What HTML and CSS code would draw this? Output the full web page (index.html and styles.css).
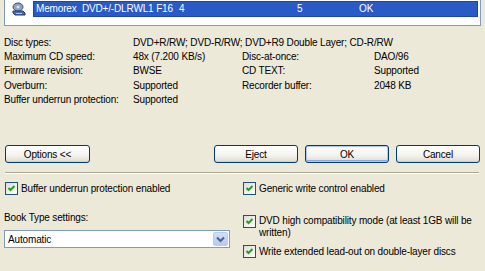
FILE: index.html
```html
<!DOCTYPE html>
<html lang="en">
<head>
    <meta charset="UTF-8">
    <meta name="viewport" content="width=device-width, initial-scale=1.0">
    <link rel="stylesheet" href="styles.css">
    <title>Recorder Selection</title>
</head>
<body>

    <!-- Drive list -->
    <div class="drive-list">
        <div class="drive-row">
            <svg class="drive-icon" width="14" height="14" viewBox="0 0 14 14">
                <ellipse cx="6" cy="5" rx="5" ry="4" fill="#8fa3c4" stroke="#3c4f78" stroke-width="1"/>
                <ellipse cx="6" cy="5" rx="1.5" ry="1.2" fill="#dfe6f2"/>
                <path d="M1 9 L11 9 L13 11 L13 13 L3 13 L1 11 Z" fill="#4a6db3" stroke="#23386a" stroke-width="1"/>
                <rect x="4" y="11" width="6" height="1" fill="#a9c0ea"/>
            </svg>
            <div class="drive-selected">
                <span>Memorex&nbsp; DVD+/-DLRWL1 F16</span>
                <span>4</span>
                <span>5</span>
                <span>OK</span>
            </div>
        </div>
    </div>

    <!-- Drive properties -->
    <div class="info">
        <span>Disc types:</span>
        <span class="wide">DVD+R/RW; DVD-R/RW; DVD+R9 Double Layer; CD-R/RW</span>

        <span>Maximum CD speed:</span>
        <span>48x (7.200 KB/s)</span>
        <span>Disc-at-once:</span>
        <span>DAO/96</span>

        <span>Firmware revision:</span>
        <span>BWSE</span>
        <span>CD TEXT:</span>
        <span>Supported</span>

        <span>Overburn:</span>
        <span>Supported</span>
        <span>Recorder buffer:</span>
        <span>2048 KB</span>

        <span>Buffer underrun protection:</span>
        <span>Supported</span>
    </div>

    <div class="button-bar">
        <button class="btn">Options &lt;&lt;</button>
        <div class="spacer"></div>
        <button class="btn">Eject</button>
        <button class="btn default">OK</button>
        <button class="btn">Cancel</button>
    </div>

    <div class="separator"></div>

    <div class="options">
        <div class="col">
            <label class="check">
                <span class="box"><svg width="9" height="9" viewBox="0 0 9 9"><path d="M1.5 4 L3.5 6 L7.5 2" fill="none" stroke="#21a121" stroke-width="2"/></svg></span>
                <span>Buffer underrun protection enabled</span>
            </label>

            <div class="field-label">Book Type settings:</div>
            <div class="combo">
                <span class="combo-text">Automatic</span>
                <span class="combo-btn">
                    <svg width="9" height="7" viewBox="0 0 9 7"><path d="M1 1.5 L4.5 5 L8 1.5" fill="none" stroke="#4d6185" stroke-width="2"/></svg>
                </span>
            </div>
        </div>

        <div class="col">
            <label class="check">
                <span class="box"><svg width="9" height="9" viewBox="0 0 9 9"><path d="M1.5 4 L3.5 6 L7.5 2" fill="none" stroke="#21a121" stroke-width="2"/></svg></span>
                <span>Generic write control enabled</span>
            </label>

            <label class="check multi">
                <span class="box"><svg width="9" height="9" viewBox="0 0 9 9"><path d="M1.5 4 L3.5 6 L7.5 2" fill="none" stroke="#21a121" stroke-width="2"/></svg></span>
                <span>DVD high compatibility mode (at least 1GB will be written)</span>
            </label>

            <label class="check last">
                <span class="box"><svg width="9" height="9" viewBox="0 0 9 9"><path d="M1.5 4 L3.5 6 L7.5 2" fill="none" stroke="#21a121" stroke-width="2"/></svg></span>
                <span>Write extended lead-out on double-layer discs</span>
            </label>
        </div>
    </div>

</body>
</html>
```

FILE: styles.css
```css
body {
    font-family: 'Liberation Sans', Arial, sans-serif;
    font-size: 10px;
    letter-spacing: -0.15px;
    background-color: #ece9d8;
    color: #000;
    margin: 0;
    width: 485px;
    height: 271px;
    overflow: hidden;
}

/* Drive list */
.drive-list {
    margin: -4px 4px 0;
    height: 30px;
    box-sizing: border-box;
    border: 1px solid #7f9db9;
    background-color: #fff;
    padding-top: 4px;
}

.drive-row {
    display: flex;
    align-items: center;
    height: 16px;
    padding-left: 7px;
}

.drive-icon {
    flex: none;
    margin-right: 7px;
}

.drive-selected {
    flex: 1;
    height: 16px;
    box-sizing: border-box;
    margin-right: 2px;
    padding-left: 2px;
    background-color: #2a5ac6;
    border: 1px solid #1d44b0;
    color: #fff;
    display: grid;
    grid-template-columns: 143px 118px 62px 1fr;
    align-items: center;
    line-height: 14px;
    white-space: nowrap;
}

/* Properties */
.info {
    display: grid;
    grid-template-columns: 129px 109px 132px 1fr;
    grid-auto-rows: 14.3px;
    align-items: center;
    margin-top: 9px;
    padding: 0 4px;
    white-space: nowrap;
}

.info .wide {
    grid-column: 2 / 5;
}

/* Buttons */
.button-bar {
    display: flex;
    margin-top: 39px;
    padding: 0 5px;
    gap: 7px;
}

.spacer {
    flex: 1;
}

.btn {
    width: 84px;
    height: 18px;
    padding: 0;
    font-family: inherit;
    font-size: 10px;
    letter-spacing: inherit;
    color: #000;
    border: 1px solid #003c74;
    border-radius: 3px;
    background: linear-gradient(#ffffff, #f3f2ed 60%, #e3e0d6 90%, #d6d0c5);
    box-shadow: inset 0 -1px 0 #d8d2c6;
}

.btn:first-child {
    width: 85px;
}

.btn.default {
    box-shadow: inset 0 0 0 1px #aec8f2, inset 0 -1px 0 1px #8aa9e4;
}

.separator {
    margin: 9px 6px 0 5px;
    border-top: 1px solid #aca899;
    border-bottom: 1px solid #fff;
}

/* Options */
.options {
    display: grid;
    grid-template-columns: 226px 1fr;
    column-gap: 12px;
    margin-top: 8px;
    padding: 0 4px;
}

.col {
    display: flex;
    flex-direction: column;
}

.check {
    display: flex;
    align-items: center;
    gap: 3px;
    padding-left: 1px;
    line-height: 12px;
}

.check.multi {
    align-items: flex-start;
    margin-top: 20px;
}

.check.last {
    margin-top: 6px;
}

.box {
    flex: none;
    width: 13px;
    height: 13px;
    box-sizing: border-box;
    border: 1px solid #1c5180;
    background: linear-gradient(135deg, #dcdcd7, #ffffff);
    display: flex;
    align-items: center;
    justify-content: center;
}

.field-label {
    margin-top: 16px;
    line-height: 14px;
}

.combo {
    margin-top: 5px;
    height: 18px;
    box-sizing: border-box;
    border: 1px solid #7f9db9;
    background-color: #fff;
    display: flex;
    align-items: center;
    padding: 0 1px 0 3px;
}

.combo-text {
    flex: 1;
}

.combo-btn {
    width: 15px;
    height: 14px;
    box-sizing: border-box;
    border: 1px solid #b9cbf3;
    border-radius: 2px;
    background: linear-gradient(#d2dffb, #b6c9f6);
    display: flex;
    align-items: center;
    justify-content: center;
}
```
